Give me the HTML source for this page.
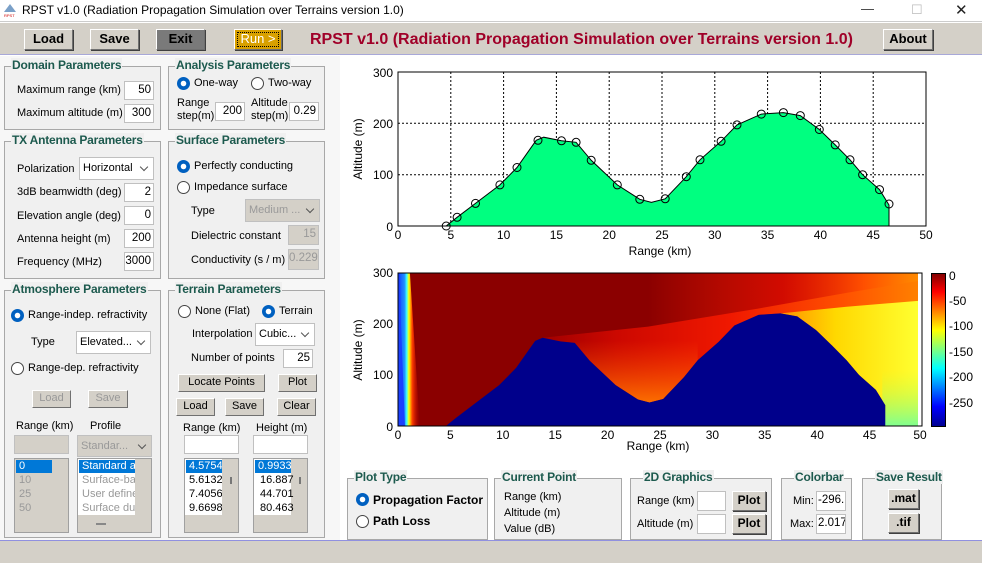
<!DOCTYPE html>
<html><head><meta charset="utf-8">
<style>
*{box-sizing:border-box;margin:0;padding:0}
body{width:982px;height:563px;position:relative;background:#fff;font-family:"Liberation Sans",Arial,sans-serif;font-size:11px;color:#000;overflow:hidden}
.a{position:absolute;white-space:nowrap}
.btn{position:absolute;background:#d4d0c8;border:1px solid;border-color:#fff #707070 #707070 #fff;box-shadow:1px 1px 0 #404040;text-align:center;font-size:11px}
.tb{font-weight:bold;font-size:13px}
.pn{position:absolute;background:#f0f0f0;border:1px solid #a8a8a8}
.pt{position:absolute;top:-9px;left:6px;background:#f0f0f0;padding:0 1px;color:#1d5a4e;font-weight:bold;font-size:12px;white-space:nowrap;letter-spacing:-.2px}
.in{position:absolute;background:#fff;border:1px solid #c0c0c0;text-align:right;padding-right:2px;font-size:11.5px;line-height:16px}
.dis{background:#d4d0c8;color:#999}
.sel{position:absolute;background:#fff;border:1px solid #c0c0c0;font-size:11px;padding-left:3px;line-height:20px}
.sel:after{content:"";position:absolute;right:6px;top:6px;width:5px;height:5px;border-right:1px solid #555;border-bottom:1px solid #555;transform:rotate(45deg)}
.r{position:absolute;width:13px;height:13px;border-radius:50%;border:1px solid #444;background:#fff}
.r.on{border:1px solid #0060c0;background:radial-gradient(circle,#fff 0 2.5px,#0060c0 3px)}
.lt{font-size:11px}
.lst{position:absolute;border:1px solid #a0a0a0;background:#d4d0c8}
.it{position:absolute;left:1px;height:13px;line-height:13px;font-size:11px;padding-left:3px;white-space:nowrap}
</style></head><body>
<div class="a" style="left:0;top:0;width:982px;height:22px;background:#fff;border-bottom:1px solid #ccc"></div>
<svg class="a" style="left:3px;top:3px" width="14" height="14"><polygon points="7,1 13,9 1,9" fill="#7aa0c8"/><text x="1" y="14" font-size="4" fill="#c00">RPST</text></svg>
<div class="a" style="left:22px;top:3px;font-size:12px">RPST v1.0 (Radiation Propagation Simulation over Terrains version 1.0)</div>
<div class="a" style="left:861px;top:1px;font-size:13px;color:#333">—</div>
<div class="a" style="left:911px;top:2px;font-size:13px;color:#bbb">☐</div>
<div class="a" style="left:955px;top:1px;font-size:15px;color:#222">✕</div>
<div class="a" style="left:0;top:23px;width:982px;height:32px;background:#d4d0c8;border-bottom:1px solid #a8a8d8"></div>
<div class="btn tb" style="left:24px;top:29px;width:49px;height:21px;line-height:18px">Load</div>
<div class="btn tb" style="left:90px;top:29px;width:49px;height:21px;line-height:18px">Save</div>
<div class="btn tb" style="left:156px;top:29px;width:49px;height:21px;line-height:18px;background:#7a7a7a">Exit</div>
<div class="btn tb" style="left:234px;top:29px;width:48px;height:21px;line-height:17px;background:#d8a000;color:#fff;font-weight:normal;outline:1px dotted #000;outline-offset:-4px">Run &gt;</div>
<div class="a" style="left:310px;top:31px;font-size:16px;font-weight:bold;color:#a00028">RPST v1.0 (Radiation Propagation Simulation over Terrains version 1.0)</div>
<div class="btn tb" style="left:883px;top:29px;width:50px;height:21px;line-height:18px">About</div>
<div class="a" style="left:0;top:56px;width:340px;height:484px;background:#f7f7f7"></div>

<div class="pn" style="left:4px;top:66px;width:157px;height:64px"><div class="pt">Domain Parameters</div></div>
<div class="a lt" style="left:17px;top:84px">Maximum range (km)</div>
<div class="in" style="left:124px;top:81px;width:30px;height:19px">50</div>
<div class="a lt" style="left:17px;top:107px">Maximum altitude (m)</div>
<div class="in" style="left:124px;top:104px;width:30px;height:19px">300</div>
<div class="pn" style="left:168px;top:66px;width:157px;height:64px"><div class="pt">Analysis Parameters</div></div>
<div class="r on" style="left:177px;top:77px"></div><div class="a lt" style="left:194px;top:77px">One-way</div>
<div class="r" style="left:251px;top:77px"></div><div class="a lt" style="left:268px;top:77px">Two-way</div>
<div class="a" style="left:177px;top:97px;line-height:13px">Range<br>step(m)</div>
<div class="in" style="left:215px;top:102px;width:30px;height:19px">200</div>
<div class="a" style="left:251px;top:97px;line-height:13px">Altitude<br>step(m)</div>
<div class="in" style="left:289px;top:102px;width:30px;height:19px">0.29</div>
<div class="pn" style="left:4px;top:141px;width:157px;height:138px"><div class="pt">TX Antenna Parameters</div></div>
<div class="a lt" style="left:17px;top:163px">Polarization</div>
<div class="sel" style="left:79px;top:157px;width:75px;height:23px">Horizontal</div>
<div class="a lt" style="left:17px;top:186px">3dB beamwidth (deg)</div>
<div class="in" style="left:124px;top:183px;width:30px;height:19px">2</div>
<div class="a lt" style="left:17px;top:210px">Elevation angle (deg)</div>
<div class="in" style="left:124px;top:206px;width:30px;height:19px">0</div>
<div class="a lt" style="left:17px;top:233px">Antenna height (m)</div>
<div class="in" style="left:124px;top:229px;width:30px;height:19px">200</div>
<div class="a lt" style="left:17px;top:256px">Frequency (MHz)</div>
<div class="in" style="left:124px;top:252px;width:30px;height:19px">3000</div>
<div class="pn" style="left:168px;top:141px;width:157px;height:138px"><div class="pt">Surface Parameters</div></div>
<div class="r on" style="left:177px;top:160px"></div><div class="a lt" style="left:194px;top:160px">Perfectly conducting</div>
<div class="r" style="left:177px;top:181px"></div><div class="a lt" style="left:194px;top:181px">Impedance surface</div>
<div class="a lt" style="left:191px;top:205px">Type</div>
<div class="sel" style="left:245px;top:199px;width:75px;height:23px;background:#d4d0c8;color:#999">Medium ...</div>
<div class="a lt" style="left:191px;top:230px">Dielectric constant</div>
<div class="in dis" style="left:288px;top:225px;width:31px;height:20px">15</div>
<div class="a lt" style="left:191px;top:254px">Conductivity (s / m)</div>
<div class="in dis" style="left:288px;top:249px;width:31px;height:21px">0.229</div>
<div class="pn" style="left:4px;top:290px;width:157px;height:248px"><div class="pt">Atmosphere Parameters</div></div>
<div class="r on" style="left:11px;top:309px"></div><div class="a lt" style="left:28px;top:309px">Range-indep. refractivity</div>
<div class="a lt" style="left:31px;top:336px">Type</div>
<div class="sel" style="left:76px;top:331px;width:75px;height:23px">Elevated...</div>
<div class="r" style="left:11px;top:362px"></div><div class="a lt" style="left:28px;top:362px">Range-dep. refractivity</div>
<div class="btn" style="left:32px;top:390px;width:39px;height:18px;line-height:15px;color:#999;box-shadow:none">Load</div>
<div class="btn" style="left:88px;top:390px;width:40px;height:18px;line-height:15px;color:#999;box-shadow:none">Save</div>
<div class="a lt" style="left:16px;top:420px">Range (km)</div>
<div class="a lt" style="left:90px;top:420px">Profile</div>
<div class="in dis" style="left:14px;top:435px;width:55px;height:19px"></div>
<div class="sel" style="left:77px;top:435px;width:75px;height:22px;background:#d4d0c8;color:#999">Standar...</div>
<div class="lst" style="left:14px;top:458px;width:55px;height:75px">
<div class="it" style="top:1px;width:36px;background:#0078d7;color:#fff">0</div>
<div class="it" style="top:15px;color:#999">10</div><div class="it" style="top:29px;color:#999">25</div><div class="it" style="top:43px;color:#999">50</div></div>
<div class="lst" style="left:77px;top:458px;width:75px;height:75px">
<div style="position:absolute;left:0;top:0;width:57px;height:56px;background:#fff"></div>
<div class="it" style="top:1px;width:56px;background:#0078d7;color:#fff;overflow:hidden">Standard at</div>
<div class="it" style="top:15px;color:#999;width:56px;overflow:hidden">Surface-ba</div>
<div class="it" style="top:29px;color:#999;width:56px;overflow:hidden">User define</div>
<div class="it" style="top:43px;color:#999;width:56px;overflow:hidden">Surface du</div>
<div style="position:absolute;left:18px;top:64px;width:10px;height:2px;background:#888"></div></div>
<div class="pn" style="left:168px;top:290px;width:157px;height:248px"><div class="pt">Terrain Parameters</div></div>
<div class="r" style="left:178px;top:305px"></div><div class="a lt" style="left:195px;top:305px">None (Flat)</div>
<div class="r on" style="left:262px;top:305px"></div><div class="a lt" style="left:279px;top:305px">Terrain</div>
<div class="a lt" style="left:192px;top:328px">Interpolation</div>
<div class="sel" style="left:255px;top:323px;width:60px;height:23px">Cubic...</div>
<div class="a lt" style="left:191px;top:352px">Number of points</div>
<div class="in" style="left:283px;top:349px;width:30px;height:19px">25</div>
<div class="btn" style="left:178px;top:374px;width:87px;height:18px;line-height:15px;box-shadow:none">Locate Points</div>
<div class="btn" style="left:278px;top:374px;width:39px;height:18px;line-height:15px;box-shadow:none">Plot</div>
<div class="btn" style="left:176px;top:398px;width:39px;height:18px;line-height:15px;box-shadow:none">Load</div>
<div class="btn" style="left:225px;top:398px;width:39px;height:18px;line-height:15px;box-shadow:none">Save</div>
<div class="btn" style="left:277px;top:398px;width:39px;height:18px;line-height:15px;box-shadow:none">Clear</div>
<div class="a lt" style="left:183px;top:422px">Range (km)</div>
<div class="a lt" style="left:256px;top:422px">Height (m)</div>
<div class="in" style="left:184px;top:435px;width:55px;height:19px"></div>
<div class="in" style="left:253px;top:435px;width:55px;height:19px"></div>
<div class="lst" style="left:184px;top:458px;width:55px;height:75px"><div style="position:absolute;left:0;top:0;width:37px;height:56px;background:#fff"></div>
<div class="it" style="top:1px;width:36px;background:#0078d7;color:#fff;overflow:hidden">4.57547</div>
<div class="it" style="top:15px;width:36px;overflow:hidden">5.61321</div><div class="it" style="top:29px;width:36px;overflow:hidden">7.40566</div><div class="it" style="top:43px;width:36px;overflow:hidden">9.66981</div>
<div style="position:absolute;left:45px;top:18px;width:2px;height:7px;background:#777"></div></div>
<div class="lst" style="left:253px;top:458px;width:55px;height:75px"><div style="position:absolute;left:0;top:0;width:37px;height:56px;background:#fff"></div>
<div class="it" style="top:1px;width:36px;background:#0078d7;color:#fff;overflow:hidden">0.99331</div>
<div class="it" style="top:15px;width:36px;padding-left:5px">16.887</div><div class="it" style="top:29px;width:36px;padding-left:5px">44.701</div><div class="it" style="top:43px;width:36px;padding-left:5px">80.463</div>
<div style="position:absolute;left:45px;top:18px;width:2px;height:7px;background:#777"></div></div>

<svg class="a" style="left:0;top:0" width="982" height="470" font-family="Liberation Sans,Arial,sans-serif" font-size="12">
<defs>
<linearGradient id="gA" x1="543" y1="0" x2="922" y2="0" gradientUnits="userSpaceOnUse"><stop offset="0" stop-color="#a00000"/><stop offset=".2" stop-color="#cc0800"/><stop offset=".5" stop-color="#f01800"/><stop offset=".8" stop-color="#ff5000"/><stop offset="1" stop-color="#ff8000"/></linearGradient>
<linearGradient id="gT" x1="650" y1="0" x2="922" y2="0" gradientUnits="userSpaceOnUse"><stop offset="0" stop-color="#ff2000" stop-opacity="0"/><stop offset=".5" stop-color="#f01000" stop-opacity=".7"/><stop offset=".8" stop-color="#ff5000"/><stop offset="1" stop-color="#ff8a00"/></linearGradient>
<linearGradient id="gV" x1="0" y1="140" x2="0" y2="205" gradientUnits="userSpaceOnUse"><stop offset="0" stop-color="#ff5000" stop-opacity="0"/><stop offset="1" stop-color="#ff7a00" stop-opacity=".95"/></linearGradient>
<linearGradient id="gB" x1="783" y1="0" x2="922" y2="0" gradientUnits="userSpaceOnUse"><stop offset="0" stop-color="#ff9000"/><stop offset=".4" stop-color="#ffd800"/><stop offset="1" stop-color="#ffff30"/></linearGradient>
<linearGradient id="gG" x1="0" y1="170" x2="0" y2="226" gradientUnits="userSpaceOnUse"><stop offset="0" stop-color="#d0ff40" stop-opacity="0"/><stop offset="1" stop-color="#80ff90"/></linearGradient>
<linearGradient id="gL" x1="398" y1="0" x2="420" y2="0" gradientUnits="userSpaceOnUse"><stop offset="0" stop-color="#1040ff"/><stop offset=".3" stop-color="#2090ff"/><stop offset=".4" stop-color="#40ffff"/><stop offset=".5" stop-color="#ffff00"/><stop offset=".65" stop-color="#ff4000"/><stop offset="1" stop-color="#c00000" stop-opacity="0"/></linearGradient>
<linearGradient id="cb" x1="0" y1="0" x2="0" y2="1"><stop offset="0" stop-color="#800000"/><stop offset=".12" stop-color="#ff0000"/><stop offset=".37" stop-color="#ffff00"/><stop offset=".62" stop-color="#00ffff"/><stop offset=".87" stop-color="#0000ff"/><stop offset="1" stop-color="#00008f"/></linearGradient>
<clipPath id="cp"><rect x="398" y="72" width="524" height="154"/></clipPath>
</defs>
<rect x="398" y="72" width="528" height="154" fill="#fff" stroke="#000"/>
<g stroke="#000" stroke-dasharray="2,2" stroke-width="1">
<line x1="450.8" y1="72" x2="450.8" y2="226"/><line x1="503.6" y1="72" x2="503.6" y2="226"/><line x1="556.4" y1="72" x2="556.4" y2="226"/><line x1="609.2" y1="72" x2="609.2" y2="226"/><line x1="662" y1="72" x2="662" y2="226"/><line x1="714.8" y1="72" x2="714.8" y2="226"/><line x1="767.6" y1="72" x2="767.6" y2="226"/><line x1="820.4" y1="72" x2="820.4" y2="226"/><line x1="873.2" y1="72" x2="873.2" y2="226"/>
<line x1="398" y1="123.3" x2="926" y2="123.3"/><line x1="398" y1="174.7" x2="926" y2="174.7"/></g>
<polygon fill="#00ff80" stroke="#000" points="446.2,226 457.1,217.3 475.5,203.4 499.9,184.9 517,167.5 536.2,140.3 543.7,137.2 561.5,140.8 576.1,142.3 591.2,160.3 617.3,184.9 639.8,199.3 651.4,202.4 665.2,198.8 686.3,176.7 700,159.8 721.1,141.3 737,124.9 761.3,114.1 783.4,112.6 800.3,115.6 819.3,129.5 835.2,144.9 850,159.8 862.6,174.7 879.5,189.6 889,205 889,226"/>
<g fill="none" stroke="#000"><circle cx="446.2" cy="226" r="4"/><circle cx="457.1" cy="217.3" r="4"/><circle cx="475.5" cy="203.4" r="4"/><circle cx="499.9" cy="184.9" r="4"/><circle cx="517" cy="167.5" r="4"/><circle cx="538" cy="140.3" r="4"/><circle cx="561.5" cy="140.8" r="4"/><circle cx="576.1" cy="142.3" r="4"/><circle cx="591.2" cy="160.3" r="4"/><circle cx="617.3" cy="184.9" r="4"/><circle cx="639.8" cy="199.3" r="4"/><circle cx="665.2" cy="198.8" r="4"/><circle cx="686.3" cy="176.7" r="4"/><circle cx="700" cy="159.8" r="4"/><circle cx="721.1" cy="141.3" r="4"/><circle cx="737" cy="124.9" r="4"/><circle cx="761.3" cy="114.1" r="4"/><circle cx="783.4" cy="112.6" r="4"/><circle cx="800.3" cy="115.6" r="4"/><circle cx="819.3" cy="129.5" r="4"/><circle cx="835.2" cy="144.9" r="4"/><circle cx="850" cy="159.8" r="4"/><circle cx="862.6" cy="174.7" r="4"/><circle cx="879.5" cy="189.6" r="4"/><circle cx="889" cy="204" r="4"/></g>
<rect x="398" y="72" width="528" height="154" fill="none" stroke="#000"/>
<g text-anchor="middle"><text x="398" y="239">0</text><text x="450.8" y="239">5</text><text x="503.6" y="239">10</text><text x="556.4" y="239">15</text><text x="609.2" y="239">20</text><text x="662" y="239">25</text><text x="714.8" y="239">30</text><text x="767.6" y="239">35</text><text x="820.4" y="239">40</text><text x="873.2" y="239">45</text><text x="926" y="239">50</text>
<text x="660" y="255">Range (km)</text></g>
<g text-anchor="end"><text x="393" y="77">300</text><text x="393" y="128">200</text><text x="393" y="179">100</text><text x="393" y="231">0</text></g>
<text transform="translate(362,149) rotate(-90)" text-anchor="middle">Altitude (m)</text>

<g transform="translate(398,426) scale(0.9924,0.9935) translate(-398,-226)">
<g clip-path="url(#cp)">
<rect x="398" y="72" width="528" height="154" fill="#8b0000"/>
<rect x="650" y="72" width="276" height="60" fill="url(#gT)"/>
<polygon fill="url(#gA)" points="543.7,137.2 650,126 760,108 850,92 922,80 922,226 889,226 889,205 879.5,189.6 862.6,174.7 850,159.8 835.2,144.9 819.3,129.5 800.3,115.6 783.4,112.6 761.3,114.1 737,124.9 721.1,141.3 700,159.8 686.3,176.7 665.2,198.8 651.4,202.4 639.8,199.3 617.3,184.9 591.2,160.3 576.1,142.3 561.5,140.8"/>
<polygon fill="url(#gV)" points="543.7,137.2 600,134 700,140 700,159.8 686.3,176.7 665.2,198.8 651.4,202.4 639.8,199.3 617.3,184.9 591.2,160.3 576.1,142.3 561.5,140.8"/>
<polygon fill="url(#gB)" points="783.4,112.6 850,106 922,100 922,226 889,226 889,205 879.5,189.6 862.6,174.7 850,159.8 835.2,144.9 819.3,129.5 800.3,115.6"/>
<rect x="886" y="170" width="40" height="56" fill="url(#gG)"/>
<polygon fill="url(#gL)" points="398,72 410,72 420,226 398,226"/>
<polygon fill="#1a40ff" points="398,72 400,72 401,123 405,226 398,226"/>
<polygon fill="#00008b" points="446.2,226 457.1,217.3 475.5,203.4 499.9,184.9 517,167.5 536.2,140.3 543.7,137.2 561.5,140.8 576.1,142.3 591.2,160.3 617.3,184.9 639.8,199.3 651.4,202.4 665.2,198.8 686.3,176.7 700,159.8 721.1,141.3 737,124.9 761.3,114.1 783.4,112.6 800.3,115.6 819.3,129.5 835.2,144.9 850,159.8 862.6,174.7 879.5,189.6 889,205 889,226"/>
</g></g>
<rect x="398" y="273" width="524" height="153" fill="none" stroke="#000"/>
<g text-anchor="middle"><text x="398" y="439">0</text><text x="450.4" y="439">5</text><text x="502.8" y="439">10</text><text x="555.2" y="439">15</text><text x="607.6" y="439">20</text><text x="660" y="439">25</text><text x="712.4" y="439">30</text><text x="764.8" y="439">35</text><text x="817.2" y="439">40</text><text x="869.6" y="439">45</text><text x="920" y="439">50</text>
<text x="658" y="450">Range (km)</text></g>
<g text-anchor="end"><text x="393" y="277">300</text><text x="393" y="328">200</text><text x="393" y="379">100</text><text x="393" y="431">0</text></g>
<text transform="translate(362,350) rotate(-90)" text-anchor="middle">Altitude (m)</text>
<rect x="931.5" y="273.5" width="14" height="153" fill="url(#cb)" stroke="#000"/>
<g><text x="949" y="280">0</text><text x="949" y="305">-50</text><text x="949" y="330">-100</text><text x="949" y="356">-150</text><text x="949" y="381">-200</text><text x="949" y="407">-250</text></g>
</svg>

<div class="pn" style="left:347px;top:478px;width:141px;height:62px"><div class="pt">Plot Type</div></div>
<div class="r on" style="left:356px;top:493px"></div><div class="a" style="left:373px;top:493px;font-weight:bold;font-size:12px">Propagation Factor</div>
<div class="r" style="left:356px;top:515px"></div><div class="a" style="left:373px;top:514px;font-weight:bold;font-size:12px">Path Loss</div>
<div class="pn" style="left:494px;top:478px;width:128px;height:62px"><div class="pt">Current Point</div></div>
<div class="a" style="left:504px;top:489px;line-height:16px">Range (km)<br>Altitude (m)<br>Value (dB)</div>
<div class="pn" style="left:630px;top:478px;width:142px;height:62px"><div class="pt" style="left:12px">2D Graphics</div></div>
<div class="a" style="left:637px;top:495px">Range (km)</div>
<div class="in" style="left:697px;top:491px;width:29px;height:20px"></div>
<div class="btn" style="left:732px;top:491px;width:34px;height:20px;line-height:17px;font-weight:bold;font-size:12px">Plot</div>
<div class="a" style="left:637px;top:518px">Altitude (m)</div>
<div class="in" style="left:697px;top:514px;width:29px;height:20px"></div>
<div class="btn" style="left:732px;top:514px;width:34px;height:20px;line-height:17px;font-weight:bold;font-size:12px">Plot</div>
<div class="pn" style="left:781px;top:478px;width:71px;height:62px"><div class="pt" style="left:12px">Colorbar</div></div>
<div class="a" style="left:793px;top:495px">Min:</div>
<div class="in" style="left:816px;top:491px;width:30px;height:20px;text-align:left;padding-left:1px;overflow:hidden">-296.:</div>
<div class="a" style="left:790px;top:518px">Max:</div>
<div class="in" style="left:816px;top:514px;width:30px;height:20px;text-align:left;padding-left:1px;overflow:hidden">2.017</div>
<div class="pn" style="left:862px;top:478px;width:80px;height:62px"><div class="pt" style="left:12px">Save Result</div></div>
<div class="btn" style="left:888px;top:489px;width:31px;height:20px;line-height:17px;font-weight:bold;font-size:12px">.mat</div>
<div class="btn" style="left:888px;top:513px;width:31px;height:20px;line-height:17px;font-weight:bold;font-size:12px">.tif</div>
<div class="a" style="left:0;top:540px;width:982px;height:23px;background:#d4d0c8;border-top:1px solid #9090e0"></div>
</body></html>
